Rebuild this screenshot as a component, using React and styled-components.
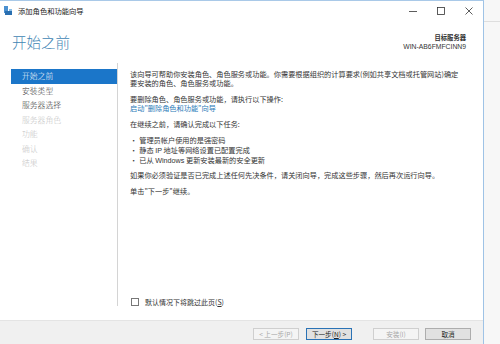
import React from "react";
import styled, { createGlobalStyle } from "styled-components";

const Global = createGlobalStyle`
  html, body { margin: 0; padding: 0; background: #f7f7f7; }
  body { font-family: "Noto Sans CJK SC", "Noto Sans", sans-serif; color: #333; }
  * { box-sizing: border-box; }
`;

const Screen = styled.div`
  display: flex;
  width: 500px;
  height: 344px;
  overflow: hidden;
  background: #f7f7f7;
`;

const Window = styled.div`
  width: 484px;
  height: 344px;
  flex: none;
  display: flex;
  flex-direction: column;
  background: #fff;
  border-right: 1px solid #9fc3e6;
  border-top: 1px solid #a9c9e8;
`;

const Aside = styled.div`
  flex: 1;
  padding-top: 21px;
`;

const AsideLine = styled.div`
  height: 1px;
  background: #dedede;
`;

const TitleBar = styled.div`
  height: 19px;
  display: flex;
  align-items: center;
  padding-left: 4px;
  font-size: 7.3px;
  color: #222;
`;

const TitleText = styled.span`
  margin-left: 5px;
  flex: 1;
`;

const Controls = styled.div`
  display: flex;
  align-items: center;
  height: 100%;
`;

const Ctrl = styled.div`
  width: 28px;
  height: 100%;
  display: flex;
  align-items: center;
  justify-content: center;
`;

const Header = styled.div`
  height: 43px;
  display: flex;
  align-items: flex-start;
  justify-content: space-between;
  padding: 13px 17px 0 12px;
`;

const PageTitle = styled.div`
  font-size: 14.5px;
  line-height: 18px;
  color: #3f86b4;
  font-weight: 300;
`;

const Server = styled.div`
  text-align: right;
  font-size: 6.3px;
  line-height: 8.5px;
  color: #333;
  padding-top: 1px;
`;

const ServerLabel = styled.div`
  font-weight: 700;
`;

const ServerName = styled.div`
  font-family: "Liberation Sans", "Noto Sans", sans-serif;
  font-size: 6.8px;
`;

const Main = styled.div`
  height: 248px;
  display: flex;
`;

const Nav = styled.div`
  width: 118px;
  flex: none;
  border-right: 1px solid #d4d4d4;
  padding-top: 6px;
  padding-left: 11px;
  margin-bottom: 5px;
`;

const NavItem = styled.div`
  height: 14.5px;
  line-height: 14.5px;
  padding-left: 11px;
  font-size: 7.8px;
  font-weight: 300;
  color: ${(p) => (p.$active ? "#fff" : p.$disabled ? "#c3c3c3" : "#333")};
  background: ${(p) => (p.$active ? "#1b76c9" : "transparent")};
`;

const Content = styled.div`
  flex: 1;
  display: flex;
  flex-direction: column;
  justify-content: space-between;
  padding: 7px 21px 4px 12px;
  font-size: 7.2px;
  line-height: 9.3px;
`;

const Para = styled.p`
  margin: 0 0 ${(p) => p.$gap ?? 6}px 0;
`;

const Link = styled.span`
  color: #2a7ab8;
  display: block;
`;

const List = styled.ul`
  margin: 0 0 5px 0;
  padding: 0;
  list-style: none;
`;

const Bullet = styled.li`
  line-height: 9.7px;
  &::before {
    content: "•";
    margin-right: 2px;
  }
`;

const Latin = styled.span`
  font-family: "Liberation Sans", sans-serif;
`;

const CheckRow = styled.label`
  display: flex;
  align-items: center;
  gap: 6px;
  padding-left: 1px;
  font-size: 7px;
`;

const Box = styled.span`
  width: 8px;
  height: 8px;
  border: 1px solid #777;
  background: #fff;
`;

const Spacer = styled.div`
  height: 9px;
`;

const Footer = styled.div`
  flex: 1;
  background: #f0f0f0;
  border-top: 1px solid #e4e4e4;
  display: flex;
  align-items: center;
  justify-content: flex-end;
  padding: 2px 12px 0 0;
`;

const Btn = styled.div`
  width: 46px;
  height: 12px;
  margin-left: ${(p) => p.$ml ?? 7}px;
  display: flex;
  align-items: center;
  justify-content: center;
  font-size: 6.6px;
  color: ${(p) => (p.$disabled ? "#a8a8a8" : "#222")};
  background: ${(p) => (p.$disabled ? "#f4f4f4" : "#e1e1e1")};
  border: 1px solid
    ${(p) => (p.$focus ? "#2a72b5" : p.$disabled ? "#cfcfcf" : "#adadad")};
`;

const U = styled.span`
  text-decoration: underline;
`;

function AppIcon() {
  return (
    <svg width="9" height="9" viewBox="0 0 9 9">
      <rect x="0" y="0" width="4" height="7" fill="#4a90d0" />
      <rect x="1" y="5" width="7" height="4" fill="#2a6fb0" />
      <rect x="5" y="3" width="3" height="2" fill="#8cc0e8" />
    </svg>
  );
}

export default function App() {
  const nav = [
    ["开始之前", "active"],
    ["安装类型", ""],
    ["服务器选择", ""],
    ["服务器角色", "disabled"],
    ["功能", "disabled"],
    ["确认", "disabled"],
    ["结果", "disabled"],
  ];
  return (
    <>
      <Global />
      <Screen>
        <Window>
          <TitleBar>
            <AppIcon />
            <TitleText>添加角色和功能向导</TitleText>
            <Controls>
              <Ctrl>
                <svg width="8" height="8" viewBox="0 0 8 8">
                  <line x1="0" y1="4.5" x2="8" y2="4.5" stroke="#333" strokeWidth="0.8" />
                </svg>
              </Ctrl>
              <Ctrl>
                <svg width="8" height="8" viewBox="0 0 8 8">
                  <rect x="0.5" y="0.5" width="7" height="7" fill="none" stroke="#333" strokeWidth="0.8" />
                </svg>
              </Ctrl>
              <Ctrl>
                <svg width="8" height="8" viewBox="0 0 8 8">
                  <path d="M0.5 0.5 L7.5 7.5 M7.5 0.5 L0.5 7.5" stroke="#333" strokeWidth="0.8" />
                </svg>
              </Ctrl>
            </Controls>
          </TitleBar>
          <Header>
            <PageTitle>开始之前</PageTitle>
            <Server>
              <ServerLabel>目标服务器</ServerLabel>
              <ServerName>WIN-AB6FMFCINN9</ServerName>
            </Server>
          </Header>
          <Main>
            <Nav>
              {nav.map(([t, s]) => (
                <NavItem key={t} $active={s === "active"} $disabled={s === "disabled"}>
                  {t}
                </NavItem>
              ))}
            </Nav>
            <Content>
              <div>
                <Para>
                  该向导可帮助你安装角色、角色服务或功能。你需要根据组织的计算要求(例如共享文档或托管网站)确定要安装的角色、角色服务或功能。
                </Para>
                <Para $gap={7}>
                  要删除角色、角色服务或功能，请执行以下操作:
                  <Link>启动"删除角色和功能"向导</Link>
                </Para>
                <Para $gap={7}>在继续之前，请确认完成以下任务:</Para>
                <List>
                  <Bullet>管理员帐户使用的是强密码</Bullet>
                  <Bullet>
                    静态 <Latin>IP</Latin> 地址等网络设置已配置完成
                  </Bullet>
                  <Bullet>
                    已从 <Latin>Windows</Latin> 更新安装最新的安全更新
                  </Bullet>
                </List>
                <Para $gap={7}>
                  如果你必须验证是否已完成上述任何先决条件，请关闭向导，完成这些步骤，然后再次运行向导。
                </Para>
                <Para>单击"下一步"继续。</Para>
              </div>
              <CheckRow>
                <Box />
                <span>
                  默认情况下将跳过此页(<U>S</U>)
                </span>
              </CheckRow>
            </Content>
          </Main>
          <Spacer />
          <Footer>
            <Btn $disabled>&lt; 上一步(P)</Btn>
            <Btn $focus>
              下一步(<U>N</U>) &gt;
            </Btn>
            <Btn $disabled $ml={21}>
              安装(I)
            </Btn>
            <Btn $ml={6}>取消</Btn>
          </Footer>
        </Window>
        <Aside>
          <AsideLine />
        </Aside>
      </Screen>
    </>
  );
}
